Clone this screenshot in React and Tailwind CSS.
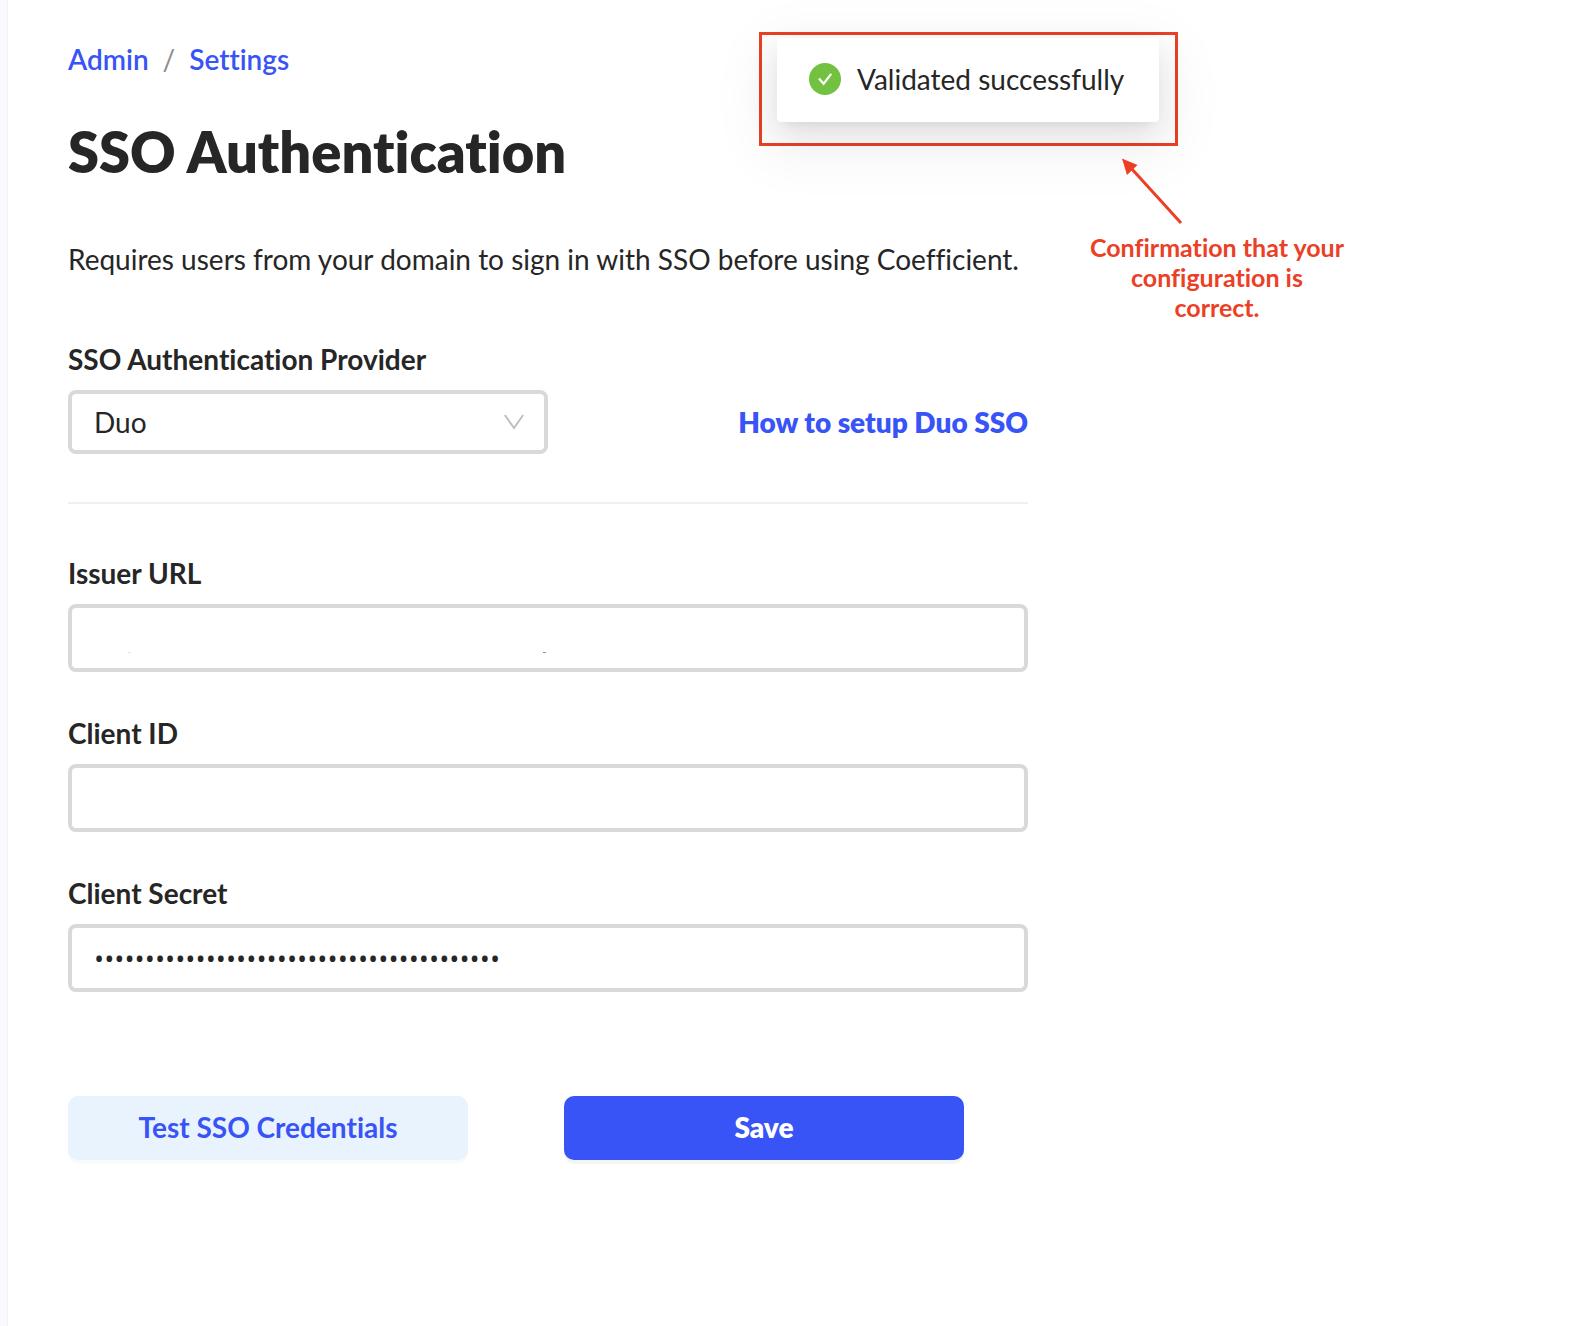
import { useState } from "react";

const PROVIDERS = ["Duo", "Okta", "OneLogin", "Azure AD"];

function Breadcrumbs() {
  return (
    <nav aria-label="Breadcrumb" className="flex gap-[14px] font-semibold text-[#3853f6]">
      <a href="#admin">Admin</a>
      <span className="font-normal text-[#8c8c8c]">/</span>
      <a href="#settings">Settings</a>
    </nav>
  );
}

function Field({ id, label, inputClass = "", children, ...props }) {
  return (
    <div className="flex flex-col gap-[13px]">
      <label htmlFor={id} className="font-bold">
        {label}
      </label>
      <div className="relative">
        <input
          id={id}
          className={`block h-[68px] w-full rounded-lg border-4 border-[#d9d9d9] bg-white px-[22px] outline-none focus:border-[#3853f6] ${inputClass}`}
          {...props}
        />
        {children}
      </div>
    </div>
  );
}

function ProviderSelect() {
  const [provider, setProvider] = useState("Duo");

  return (
    <div className="flex flex-col gap-[13px]">
      <label htmlFor="provider" className="font-bold">
        SSO Authentication Provider
      </label>
      <div className="flex items-center justify-between">
        <div className="relative w-1/2">
          <select
            id="provider"
            value={provider}
            onChange={(e) => setProvider(e.target.value)}
            className="block h-16 w-full appearance-none rounded-lg border-4 border-[#d9d9d9] bg-white px-[22px] outline-none"
          >
            {PROVIDERS.map((name) => (
              <option key={name}>{name}</option>
            ))}
          </select>
          <svg
            className="pointer-events-none absolute top-6 right-6 h-4 w-5"
            viewBox="0 0 20 16"
            fill="none"
            stroke="#bfbfbf"
            strokeWidth="2"
            aria-hidden="true"
          >
            <path d="M0.8 1L10 14L19.2 1" />
          </svg>
        </div>
        <a href="#setup" className="font-extrabold text-[#3853f6]">
          How to setup {provider} SSO
        </a>
      </div>
    </div>
  );
}

function Toast() {
  return (
    <div className="absolute top-8 left-[759px] border-[3px] border-[#eb4026] pt-[3px] pr-4 pb-[21px] pl-[15px]">
      <div
        role="status"
        className="flex h-[84px] w-[382px] items-center gap-4 rounded-sm bg-white px-8 pb-[2px] whitespace-nowrap shadow-[0_6px_12px_-8px_rgba(0,0,0,0.12),0_12px_32px_0_rgba(0,0,0,0.08),0_18px_56px_16px_rgba(0,0,0,0.05)]"
      >
        <svg className="h-8 w-8 shrink-0" viewBox="0 0 32 32" fill="none" aria-hidden="true">
          <circle cx="16" cy="16" r="16" fill="#73c140" />
          <path d="M10 15.5L14.6 20.7L22.2 10.8" stroke="#fff" strokeWidth="2.2" />
        </svg>
        Validated successfully
      </div>
    </div>
  );
}

function Callout() {
  return (
    <div className="absolute top-[158px] left-[1087px] w-[260px] text-center text-[25px] leading-[30px] font-bold whitespace-nowrap text-[#eb4026]">
      <svg className="ml-[34px] h-[74px] w-[64px]" viewBox="0 0 64 74" aria-hidden="true">
        <path d="M10 10L60 65" stroke="#eb4026" strokeWidth="3" />
        <path d="M1 0.5L16.5 7L6 17Z" fill="#eb4026" />
      </svg>
      <p>
        Confirmation that your
        <br />
        configuration is
        <br />
        correct.
      </p>
    </div>
  );
}

export default function App() {
  return (
    <div className="relative flex min-h-screen bg-white font-['Lato',sans-serif] text-[28px] leading-9 text-[#262626] [font-variant-ligatures:none]">
      <div className="w-2 shrink-0 border-r border-[#f0f0f5] bg-[#f8faff]" />

      <main className="w-full max-w-[1080px] px-[60px] pt-[41px]">
        <Breadcrumbs />
        <h1 className="mt-[39px] text-[56px] leading-[72px] font-extrabold">SSO Authentication</h1>
        <p className="mt-[53px]">
          Requires users from your domain to sign in with SSO before using Coefficient.
        </p>

        <form className="mt-16" onSubmit={(e) => e.preventDefault()}>
          <ProviderSelect />
          <hr className="mt-12 mb-[51px] border-t-2 border-[#f0f0f0]" />

          <div className="flex flex-col gap-[43px]">
            <Field id="issuer" label="Issuer URL" type="text">
              <svg className="pointer-events-none absolute top-12 left-15 h-px w-[420px]" aria-hidden="true">
                <rect width="3" height="1" fill="#e0e0e0" />
                <rect x="415" width="3" height="1" fill="#909090" />
              </svg>
            </Field>
            <Field id="client-id" label="Client ID" type="text" />
            <Field
              id="client-secret"
              label="Client Secret"
              type="password"
              defaultValue={"x".repeat(40)}
              inputClass="font-['Open_Sans',sans-serif] text-[27px]"
            />
          </div>

          <div className="mt-26 flex gap-24">
            <button
              type="button"
              className="h-16 w-[400px] rounded-[10px] bg-[#e8f3fe] pb-[2px] font-bold text-[#3853f6] shadow-[0_4px_0_rgba(0,0,0,0.02)]"
            >
              Test SSO Credentials
            </button>
            <button
              type="submit"
              className="h-16 w-[400px] rounded-[10px] bg-[#3853f6] pb-[2px] font-extrabold text-white shadow-[0_4px_0_rgba(0,0,0,0.04)]"
            >
              Save
            </button>
          </div>
        </form>
      </main>

      <Toast />
      <Callout />
    </div>
  );
}
